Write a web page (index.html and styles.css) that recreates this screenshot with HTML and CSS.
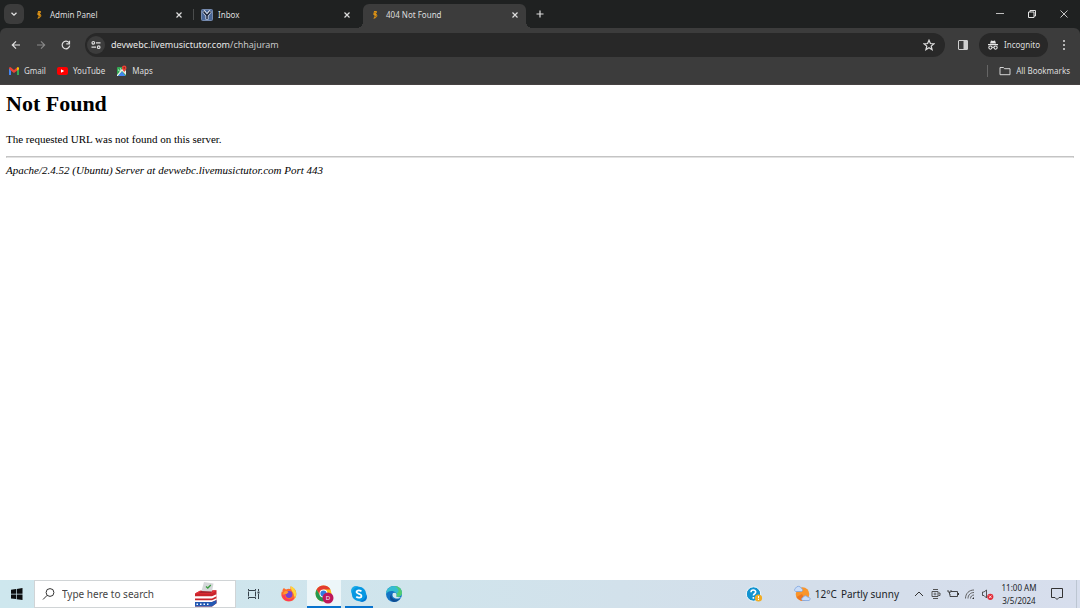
FILE: index.html
```
<!DOCTYPE html>
<html lang="en">
<head>
    <meta charset="UTF-8">
    <meta name="viewport" content="width=device-width, initial-scale=1.0">
    <title>404 Not Found</title>
    <link rel="stylesheet" href="styles.css">
</head>
<body>
    <svg width="0" height="0" class="sprite" aria-hidden="true">
        <symbol id="tutor" viewBox="0 0 8 10">
            <path d="M3 1h3v2L5 4l1.500 1.500v1.500L4 9.500H2L3.500 7.500V6L2 5z" fill="#dc9318"/>
            <path d="M3.500 3h1M5.500 6l-1 2" stroke="#6b430a" stroke-width=".8"/>
        </symbol>
        <symbol id="close" viewBox="0 0 10 10">
            <path d="M2.500 2.500l5 5M7.500 2.500l-5 5" stroke="#dedede" stroke-width="1.200"/>
        </symbol>
    </svg>

    <header class="browser">
        <div class="tab-strip">
            <button class="tab-search" aria-label="Search tabs">
                <svg width="8" height="8" viewBox="0 0 8 8"><path d="M1.500 2.800L4 5.200l2.500-2.400" fill="none" stroke="#e3e3e3" stroke-width="1.300"/></svg>
            </button>
            <div class="tabs">
                <div class="tab divided">
                    <svg class="favicon" viewBox="0 0 8 10"><use href="#tutor"/></svg>
                    <span class="tab-title">Admin Panel</span>
                    <button class="icon-btn" aria-label="Close tab"><svg width="10" height="10"><use href="#close"/></svg></button>
                </div>
                <div class="tab">
                    <svg class="favicon wide" viewBox="0 0 12 12">
                        <rect x=".5" y=".5" width="11" height="11" rx="1" fill="#4a6797" stroke="#7489ad"/>
                        <path d="M2.500 2L6 6.500 9.500 2M6 6v4.500" fill="none" stroke="#e6eaf2" stroke-width="3"/>
                        <path d="M2.500 2.500L6 6.500l3.500-4M6 6v4" fill="none" stroke="#16213a" stroke-width="1.500"/>
                    </svg>
                    <span class="tab-title">Inbox</span>
                    <button class="icon-btn" aria-label="Close tab"><svg width="10" height="10"><use href="#close"/></svg></button>
                </div>
                <div class="tab active">
                    <svg class="favicon" viewBox="0 0 8 10"><use href="#tutor"/></svg>
                    <span class="tab-title">404 Not Found</span>
                    <button class="icon-btn" aria-label="Close tab"><svg width="10" height="10"><use href="#close"/></svg></button>
                </div>
            </div>
            <button class="icon-btn new-tab" aria-label="New tab">
                <svg width="10" height="10" viewBox="0 0 10 10"><path d="M5 1.500v7M1.500 5h7" stroke="#dedede" stroke-width="1.200"/></svg>
            </button>
            <div class="window-controls">
                <button class="icon-btn" aria-label="Minimize"><svg width="10" height="10" viewBox="0 0 10 10"><path d="M1 4.500h8" stroke="#d0d0d0" stroke-width=".9"/></svg></button>
                <button class="icon-btn" aria-label="Restore"><svg width="10" height="10" viewBox="0 0 10 10"><path d="M1.500 3h5.500v5.500H1.500zM3 3V1.500h5.500V7H7" fill="none" stroke="#e3e3e3"/></svg></button>
                <button class="icon-btn" aria-label="Close"><svg width="10" height="10" viewBox="0 0 10 10"><path d="M1.500 1.500l7 7M8.500 1.500l-7 7" stroke="#d8d8d8" stroke-width=".9"/></svg></button>
            </div>
        </div>

        <div class="toolbar">
            <div class="nav-buttons">
                <button class="icon-btn" aria-label="Back"><svg width="10" height="10" viewBox="0 0 10 10"><path d="M9 5H1.500M5 1.300L1.300 5 5 8.700" fill="none" stroke="#e0e0e0" stroke-width="1.200"/></svg></button>
                <button class="icon-btn" aria-label="Forward"><svg width="10" height="10" viewBox="0 0 10 10"><path d="M1 5h7.500M5 1.300L8.700 5 5 8.700" fill="none" stroke="#898989" stroke-width="1.100"/></svg></button>
                <button class="icon-btn" aria-label="Reload"><svg width="10" height="10" viewBox="0 0 10 10"><path d="M8.700 5.700A3.800 3.800 0 1 1 8 2.700" fill="none" stroke="#e0e0e0" stroke-width="1.200"/><path d="M8.500.7v3.200H5.300" fill="none" stroke="#e0e0e0" stroke-width="1.200"/></svg></button>
            </div>
            <div class="address-bar">
                <button class="site-info" aria-label="View site information">
                    <svg width="10" height="10" viewBox="0 0 10 10"><g fill="none" stroke="#dedede" stroke-width="1.200"><circle cx="2.300" cy="2.800" r="1.300"/><path d="M5 2.800h4.500M.5 7.200H5"/><circle cx="7.700" cy="7.200" r="1.300"/></g></svg>
                </button>
                <p class="url" role="textbox" aria-label="Address"><span>devwebc.livemusictutor.com</span>/chhajuram</p>
                <button class="icon-btn" aria-label="Bookmark this tab">
                    <svg width="12" height="12" viewBox="0 0 12 12"><path d="M6 1.200l1.400 3.300 3.500.3-2.700 2.300.9 3.500L6 8.700l-3.100 1.900.9-3.500-2.700-2.300 3.500-.3z" fill="none" stroke="#dedede" stroke-width="1.200"/></svg>
                </button>
            </div>
            <button class="icon-btn" aria-label="Side panel">
                <svg width="12" height="12" viewBox="0 0 12 12"><rect x="1.500" y="1.500" width="9" height="9" rx=".5" fill="none" stroke="#cfcfcf"/><path d="M6.500 1.500h4v9h-4z" fill="#cfcfcf"/></svg>
            </button>
            <button class="incognito">
                <svg width="12" height="12" viewBox="0 0 12 12"><path d="M3 4.500L4 1.500l2 .5 2-.5 1 3zM1 5h10v1.200H1z" fill="#e6e6e6"/><g fill="none" stroke="#e6e6e6" stroke-width="1.100"><circle cx="3.400" cy="8.600" r="1.600"/><circle cx="8.600" cy="8.600" r="1.600"/><path d="M5 8.300h2"/></g></svg>
                Incognito
            </button>
            <button class="icon-btn" aria-label="Menu">
                <svg width="10" height="12" viewBox="0 0 10 12"><g fill="#dedede"><circle cx="5" cy="2" r="1"/><circle cx="5" cy="6" r="1"/><circle cx="5" cy="10" r="1"/></g></svg>
            </button>
        </div>

        <nav class="bookmarks">
            <a href="#">
                <svg width="12" height="10" viewBox="0 0 12 10"><path d="M1 2v7h2V4.500z" fill="#4285f4"/><path d="M11 2v7H9V4.500z" fill="#34a853"/><path d="M1 2.500V2q.8-1.500 2-.5l3 2.400 3-2.400L9 4.700 6 7 3 4.700z" fill="#ea4335"/><path d="M9 1.500q1.200-1 2 .5v1.200L9 4.700z" fill="#fbbc04"/></svg>
                Gmail
            </a>
            <a href="#">
                <svg width="12" height="10" viewBox="0 0 12 10"><rect x="0" y="1" width="11" height="8" rx="2" fill="#f00"/><path d="M4 3.200v3.600L7.200 5z" fill="#fff"/></svg>
                YouTube
            </a>
            <a href="#">
                <svg width="12" height="12" viewBox="0 0 12 12"><rect x="1" y="2" width="9" height="9" rx="1" fill="#34a853"/><path d="M1 10L7 3l3 3v4L6 6 2 11H1z" fill="#f1f1f1"/><path d="M2 11L6 6.500 9.500 11z" fill="#4285f4"/><path d="M2.500 4.500a1.300 1.300 0 1 0 1.500-1" fill="none" stroke="#fff" stroke-width=".7"/><path d="M8.200.5a2.300 2.300 0 0 1 2.300 2.400C10.500 4.800 8.500 5.200 8.200 7.500 7.900 5.200 5.900 4.800 5.900 2.900A2.300 2.300 0 0 1 8.200.5z" fill="#ea4335"/><circle cx="8.200" cy="2.900" r=".8" fill="#8c1d18"/></svg>
                Maps
            </a>
            <a href="#" class="all-bookmarks">
                <svg width="12" height="10" viewBox="0 0 12 10"><path d="M1 1.500h3.500l1 1.200H11v6H1z" fill="none" stroke="#d4d4d4"/></svg>
                All Bookmarks
            </a>
        </nav>
    </header>

    <main class="page">
        <h1>Not Found</h1>
        <p>The requested URL was not found on this server.</p>
        <hr>
        <address>Apache/2.4.52 (Ubuntu) Server at devwebc.livemusictutor.com Port 443</address>
    </main>

    <footer class="taskbar">
        <button class="start" aria-label="Start">
            <svg width="12" height="12" viewBox="0 0 12 12"><path d="M0 1.700l5-.7v4.700H0zM5.700.9L11.500 0v5.700H5.700zM0 6.400h5v4.700l-5-.7zM5.700 6.400h5.800V12l-5.800-.8z" fill="#0b0d0e"/></svg>
        </button>
        <label class="search">
            <svg width="14" height="14" viewBox="0 0 14 14"><circle cx="8" cy="5.500" r="3.900" fill="none" stroke="#333"/><path d="M5.200 8.300L1 12.500" stroke="#333"/></svg>
            <input type="text" placeholder="Type here to search" aria-label="Type here to search">
            <svg width="24" height="26" viewBox="0 0 24 26">
                <path d="M1 12.500l5-2.700 16.500-.5v13L18 25.500H1z" fill="#c9252c"/>
                <path d="M1 12.500l5-2.700 16.500-.5L18 12.500z" fill="#e7323a"/>
                <path d="M5 11.500l2-1h12l-2 1z" fill="#681722"/>
                <path d="M1 15.200h17l4.500-2v2L18 17.500H1zM1 19.200h17l4.500-2v1.800L18 21H1z" fill="#fff"/>
                <path d="M1 21h17l4.500-2v3.300L18 25.500H1z" fill="#2459b3"/>
                <path d="M2.500 23.200h14" stroke="#fff" stroke-width="1.500" stroke-dasharray="1.500 2"/>
                <path d="M10 1l9.500 1.500-1.500 8-10.500-.5z" fill="#d5d8da"/>
                <path d="M12 5.500l1.800 1.500 3-3" fill="none" stroke="#3b9c42" stroke-width="1.300"/>
            </svg>
        </label>
        <div class="apps">
            <button aria-label="Task view">
                <svg width="14" height="14" viewBox="0 0 14 14"><path d="M1.500 2v1.500h7V2M1.500 12v-1.500h7V12M1.500 4.500v5M8.500 4.500v5M11.500 2v2M11.500 7v5" fill="none" stroke="#35414a"/><path d="M10.500 4.500h2v2h-2z" fill="#35414a"/></svg>
            </button>
            <button aria-label="Firefox">
                <svg width="18" height="18" viewBox="0 0 18 18"><path d="M2.500 5l1.300-2L6 4.500c2-1 3.500-1 4.500-.2L10.500 1.500C13 2 15 4 15.800 6c2 6-2 10.500-7 10.500S0 12 1.700 6.500L2.500 7z" fill="#ff6a2b"/><path d="M10.500 1c3 1 5 3.500 5.500 6 .8 4-1 7-3 8.500 1-2 1.500-5 .2-7.500C12 6 10.500 4 10.500 1z" fill="#ffd43a"/><path d="M2 10c1 4 4 6.500 8 6 3-.5 5-3 5-5-2 3-5 4-7.500 3S4 10 5.500 8z" fill="#ff355e"/><circle cx="9" cy="9.500" r="3.400" fill="#7741d1"/><path d="M4.500 6.500c2-.8 3-.3 4 .7L6.500 9c-2 0-3 .5-2.500 2-1-1.500-1-3.500.5-4.500z" fill="#ff9a2e"/></svg>
            </button>
            <button class="running focused" aria-label="Chrome">
                <svg width="20" height="20" viewBox="0 0 20 20"><circle cx="9.500" cy="9.500" r="8" fill="#fbc116"/><path d="M2.600 5.500a8 8 0 0 1 13.900 0h-7L6 11.500z" fill="#e33b2e"/><path d="M2.600 5.500a8 8 0 0 0 6.900 12l3.500-6H6z" fill="#229950"/><circle cx="9.500" cy="9.500" r="4" fill="#fff"/><circle cx="9.500" cy="9.500" r="3.100" fill="#307de1"/><circle cx="14" cy="14" r="5.500" fill="#bd185b"/><text x="14" y="16" class="badge-letter">D</text></svg>
            </button>
            <button class="running" aria-label="Skype">
                <svg width="18" height="18" viewBox="0 0 18 18"><circle cx="6" cy="6" r="5" fill="#18a9e8"/><circle cx="12" cy="12" r="5" fill="#0078d4"/><circle cx="9" cy="9" r="7.200" fill="#0798e2"/><path d="M11.500 6.300C8.500 4.500 6.300 5.800 6.500 7.200c.3 2 5 1.300 5 3.700 0 1.700-2.800 2.500-5.300.9" fill="none" stroke="#fff" stroke-width="1.800"/></svg>
            </button>
            <button aria-label="Edge">
                <svg width="18" height="18" viewBox="0 0 18 18"><circle cx="9" cy="9" r="8" fill="#1474c4"/><path d="M1 9C1 4 5 1 9 1c5 0 8 3 8 7 0 3-3 4.500-6 3.500 1-1 1-2.500 0-3.700C8 5 3 5.500 1 9z" fill="#35bdd0"/><path d="M9 1c5 0 8 3 8 7 0 3-3 4.500-6 3.500 1-1 1-2 .5-3C15 7 14 3 9 1z" fill="#52cb72"/><path d="M7 8.500C5 12 8 16 14.500 14c-1.500 2-3.500 3-5.500 3-4-.8-5.500-5-2-8.500z" fill="#104d91"/><path d="M8 8c-1.500 3 .5 5.500 4 5.500 2 0 3.500-.7 4.500-1.500-1.500.4-4 .5-5.500-.5 1-1.500.5-3-.7-3.700z" fill="#d5e9ef"/></svg>
            </button>
        </div>

        <div class="tray">
            <button class="help" aria-label="Get help">
                <svg width="18" height="18" viewBox="0 0 18 18"><circle cx="8.500" cy="9" r="7.200" fill="#1293d0" stroke="#f2f8fb"/><path d="M6 7.200c0-3 4.800-2.800 4.700-.2 0 1.700-2.300 1.800-2.300 3.500M8.400 12v1.700" fill="none" stroke="#fff" stroke-width="1.600"/><circle cx="13.500" cy="13" r="3.600" fill="#f2ad24"/><path d="M13.500 11v2.300M13.500 14v1" stroke="#fff"/></svg>
            </button>
            <button class="weather">
                <svg width="18" height="18" viewBox="0 0 18 18"><circle cx="9.500" cy="9" r="6.800" fill="#f9952b"/><path d="M3.500 12a6.800 6.800 0 0 0 9 3.200L9 9z" fill="#ee7620"/><path d="M2.500 6.500a2 2 0 0 1 .3-3.500 3 3 0 0 1 5.500.3 1.800 1.800 0 0 1 .5 3.200zM9.500 15.500a1.600 1.600 0 0 1 .5-3 2.600 2.600 0 0 1 4.800-.2 1.700 1.700 0 0 1 1.200 3.200z" fill="#c9dcf8" stroke="#7ea5e0" stroke-width=".8"/></svg>
                <span>12°C</span>
                <span>Partly sunny</span>
            </button>
            <div class="tray-icons">
                <button aria-label="Show hidden icons"><svg width="12" height="12" viewBox="0 0 12 12"><path d="M2 8l4-4 4 4" fill="none" stroke="#333"/></svg></button>
                <button aria-label="Meet now"><svg width="12" height="12" viewBox="0 0 12 12"><path d="M3 1.500h5M3 10.500h5M2 3.500h6v5H2zM8.500 5H10v2.500H8.500" fill="none" stroke="#444" stroke-width=".9"/><circle cx="5" cy="6" r="1" fill="none" stroke="#444" stroke-width=".7"/></svg></button>
                <button aria-label="Battery"><svg width="12" height="12" viewBox="0 0 12 12"><path d="M4 3.500h6.500v5H3V6M1 2v2h3V2M2.500 4v2.500" fill="none" stroke="#333" stroke-width=".9"/><path d="M11 5h1v2h-1z" fill="#333"/></svg></button>
                <button aria-label="Network"><svg width="12" height="12" viewBox="0 0 12 12"><path d="M1.500 10.500C1.500 5.500 5 2 10 2M4 10.500c0-3.500 2.500-6 6-6M6.500 10.500C6.500 8.500 8 7 10 7" fill="none" stroke="#555" stroke-width=".9"/><path d="M8 11l2-2v2z" fill="#333"/></svg></button>
                <button aria-label="Volume muted"><svg width="14" height="12" viewBox="0 0 14 12"><path d="M1.500 4h1.500L5.500 2v8L3 7.500H1.500z" fill="none" stroke="#444" stroke-width=".9"/><circle cx="9.300" cy="8.800" r="3.100" fill="#e22c38"/><path d="M8 7.500l2.600 2.600M10.600 7.500L8 10.100" stroke="#fff" stroke-width=".8"/></svg></button>
            </div>
            <button class="clock"><time>11:00 AM</time><time>3/5/2024</time></button>
            <button class="notifications" aria-label="Notifications"><svg width="14" height="14" viewBox="0 0 14 14"><path d="M1.500 1.500h11v9H9L7 12.500 5 10.500H1.500z" fill="none" stroke="#333"/></svg></button>
        </div>
        <button class="show-desktop" aria-label="Show desktop"></button>
    </footer>
</body>
</html>
```

FILE: styles.css
```
* {
    box-sizing: border-box;
}

body, html {
    margin: 0;
    padding: 0;
    height: 100%;
}

body {
    display: flex;
    flex-direction: column;
    background-color: #fff;
    font-family: "Noto Sans", "Open Sans", sans-serif;
}

svg {
    display: block;
    flex: none;
}

.sprite {
    position: absolute;
}

button {
    display: flex;
    align-items: center;
    justify-content: center;
    padding: 0;
    border: none;
    background: none;
    color: inherit;
    font: inherit;
    cursor: pointer;
}

/* Browser */
.browser {
    background-color: #1f2121;
    color: #dedede;
    font-size: 8px;
    line-height: 12px;
}

.tab-strip {
    display: flex;
    align-items: center;
    height: 28px;
    padding: 0 11px 0 4px;
}

.tab-search {
    width: 20px;
    height: 20px;
    border-radius: 6px;
    background-color: #3c3c3c;
}

.tabs {
    display: flex;
    align-self: flex-end;
    gap: 5px;
    margin-left: 3px;
}

.tab {
    position: relative;
    display: flex;
    align-items: center;
    width: 163px;
    height: 24px;
    padding: 0 6px 3px;
}

.tab.active {
    border-radius: 6px 6px 0 0;
    background-color: #3c3c3c;
}

.tab.active::before,
.tab.active::after {
    content: "";
    position: absolute;
    bottom: 0;
    width: 6px;
    height: 6px;
}

.tab.active::before {
    right: 100%;
    background: radial-gradient(circle at 0 0, transparent 6px, #3c3c3c 6px);
}

.tab.active::after {
    left: 100%;
    background: radial-gradient(circle at 100% 0, transparent 6px, #3c3c3c 6px);
}

.tab.divided::after {
    content: "";
    position: absolute;
    top: 5px;
    right: -4px;
    width: 1px;
    height: 11px;
    background-color: #4a4c4c;
}

.favicon {
    width: 12px;
    height: 9px;
}

.favicon.wide {
    height: 12px;
}

.tab-title {
    flex: 1;
    margin-left: 5px;
}

.new-tab {
    margin-left: 9px;
}

.window-controls {
    display: flex;
    gap: 22px;
    margin-left: auto;
}

.toolbar {
    display: flex;
    align-items: center;
    gap: 13px;
    height: 33px;
    padding: 0 11px;
    border-radius: 6px 6px 0 0;
    background-color: #3c3c3c;
}

.nav-buttons {
    display: flex;
    gap: 15px;
}

.address-bar {
    display: flex;
    flex: 1;
    align-items: center;
    height: 24px;
    margin: 0 -1px 0 1px;
    padding: 0 10px 0 2px;
    border-radius: 12px;
    background-color: #282828;
}

.site-info {
    width: 18px;
    height: 18px;
    border-radius: 50%;
    background-color: #3c3c3c;
}

.url {
    flex: 1;
    margin: 0 0 0 6px;
    color: #c7c7c7;
    font-size: 9px;
}

.url span {
    color: #e8e8e8;
}

.incognito {
    gap: 5px;
    height: 24px;
    margin: 0 -2px 0 -3px;
    padding: 0 8px;
    border-radius: 12px;
    background-color: #282828;
}

.bookmarks {
    display: flex;
    align-items: center;
    gap: 11px;
    height: 24px;
    padding: 0 10px 4px 8px;
    border-bottom: 1px solid #464242;
    background-color: #3c3c3c;
}

.bookmarks a {
    display: flex;
    align-items: center;
    gap: 4px;
    color: #dedede;
    text-decoration: none;
}

.bookmarks .all-bookmarks {
    gap: 5px;
    margin-left: auto;
    padding-left: 11px;
    border-left: 1px solid #666;
}

/* Page */
.page {
    flex: 1;
    padding: 6px;
    color: #000;
    font-family: "Liberation Serif", serif;
    font-size: 11px;
    line-height: 13px;
}

.page h1 {
    margin: 0 0 16px;
    font-size: 22px;
    line-height: 26px;
}

.page p {
    margin: 0 0 10px;
}

.page hr {
    margin: 0 0 6px;
    border: 1px solid #c4c4c4;
    border-bottom-color: #e2e2e2;
}

/* Taskbar */
.taskbar {
    display: flex;
    height: 28px;
    background: linear-gradient(90deg, #cee7ee, #d0e4ec 40%, #d4deea 75%, #d7deed);
    color: #202428;
    font-size: 10px;
}

.start {
    width: 34px;
}

.search {
    display: flex;
    align-items: center;
    width: 202px;
    padding: 0 17px 0 7px;
    border: 1px solid #d0d4d6;
    background-color: #fff;
}

.search input {
    flex: 1;
    min-width: 0;
    margin-left: 6px;
    padding: 0;
    border: none;
    outline: none;
    background: none;
    font: inherit;
}

.search input::placeholder {
    color: #454545;
    opacity: 1;
}

.apps {
    display: flex;
}

.apps button {
    width: 35px;
}

.apps .running {
    border-top: 2px solid transparent;
    border-bottom: 2px solid #0873ce;
}

.apps .focused {
    margin: 0 4px 0 1px;
    width: 34px;
    border-top-color: #edf6f9;
    background-color: #edf6f9;
}

.apps .running:not(.focused) {
    width: 28px;
    margin-right: 3px;
}

.badge-letter {
    fill: #fff;
    font-size: 6px;
    text-anchor: middle;
}

.tray {
    display: flex;
    align-items: center;
    margin-left: auto;
    padding-right: 12px;
}

.help {
    margin-right: 30px;
}

.weather {
    gap: 4px;
}

.tray-icons {
    display: flex;
    gap: 5px;
    margin-left: 14px;
}

.clock {
    flex-direction: column;
    width: 36px;
    margin-left: 6px;
    font-size: 8px;
    line-height: 13px;
}

.notifications {
    margin-left: 13px;
}

.show-desktop {
    width: 4px;
    border-left: 1px solid #bcc6d2;
}
```
